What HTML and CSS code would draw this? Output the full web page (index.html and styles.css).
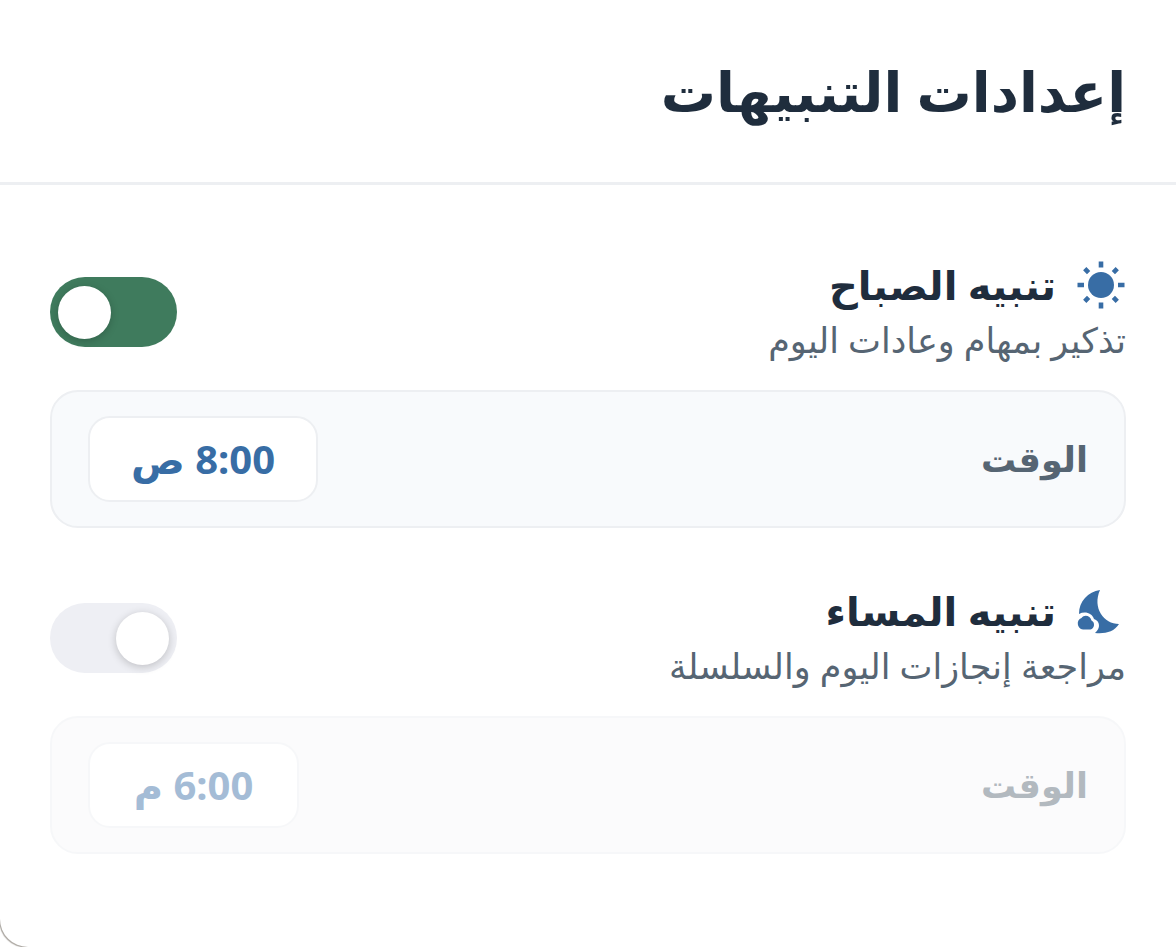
FILE: index.html
```
<!DOCTYPE html>
<html lang="ar" dir="rtl">
<head>
<meta charset="utf-8">
<meta name="viewport" content="width=device-width, initial-scale=1">
<title>إعدادات التنبيهات</title>
<link rel="stylesheet" href="styles.css">
</head>
<body>
<main class="sheet">
  <header class="sheet-header"><h1 class="title">إعدادات التنبيهات</h1></header>
  <div class="reminders">
    <section class="reminder">
      <div class="reminder-head">
        <div class="reminder-text">
          <h2 class="reminder-name">
            <svg class="icon" viewBox="0 0 50 50" aria-hidden="true"><circle cx="25" cy="25" r="13"/><path d="M22.700 1.500h4.600v6h-4.600zM22.700 42.500h4.600v6h-4.600zM1.500 22.700h6.500v4.600H1.500zM42 22.700h6.500v4.600H42z"/><path d="M22.700 2h4.600v5.500h-4.600zM22.700 42.500h4.600V48h-4.600zM2 22.700h5.500v4.600H2zM42.500 22.700H48v4.600h-5.500z" transform="rotate(45 25 25)"/></svg>
            <label for="morning">تنبيه الصباح</label>
          </h2>
          <p class="reminder-note">تذكير بمهام وعادات اليوم</p>
        </div>
        <input class="switch" type="checkbox" role="switch" id="morning" checked>
      </div>
      <div class="time-row">
        <span class="time-label" id="morning-time">الوقت</span>
        <button class="time-button" type="button" aria-describedby="morning-time">8:00 ص</button>
      </div>
    </section>
    <section class="reminder">
      <div class="reminder-head">
        <div class="reminder-text">
          <h2 class="reminder-name">
            <svg class="icon" viewBox="0 0 50 50" aria-hidden="true"><path d="M24 4C12 6 3 15 3 28c6-3 13-1 15 5 6 2 7 9 1 14 10 1 19-1 24-9C28 38 16 22 24 4z"/><path d="M7 43.500a6 6 0 0 1-1.500-11.500c3-4 9-2 10 2.500 4 2 3 8-1 9z"/></svg>
            <label for="evening">تنبيه المساء</label>
          </h2>
          <p class="reminder-note">مراجعة إنجازات اليوم والسلسلة</p>
        </div>
        <input class="switch" type="checkbox" role="switch" id="evening">
      </div>
      <div class="time-row time-row-off">
        <span class="time-label" id="evening-time">الوقت</span>
        <button class="time-button" type="button" aria-describedby="evening-time" disabled>6:00 م</button>
      </div>
    </section>
  </div>
</main>
</body>
</html>
```
FILE: styles.css
```
* { box-sizing: border-box; }
body { margin: 0; background: #fff; color: #1f2d3d; font-family: "Noto Sans", "DejaVu Sans", sans-serif; }
h1, h2, p { margin: 0; }
.sheet { min-height: 100vh; background: #fff; border-bottom-left-radius: 28px; box-shadow: -1px 1px 1px #aaa6a0; overflow: hidden; }
.sheet-header { padding: 52px 50px; border-bottom: 3px solid #edeff2; }
.title { font-size: 55px; line-height: 78px; font-weight: 700; }
.reminders { display: flex; flex-direction: column; gap: 55px; padding: 72px 50px 92px; }
.reminder { display: flex; flex-direction: column; gap: 23px; }
.reminder-head { display: flex; align-items: center; justify-content: space-between; }
.reminder-name { display: flex; align-items: center; gap: 20px; font-size: 40px; line-height: 56px; font-weight: 700; }
.icon { width: 50px; height: 50px; fill: #386da5; }
.reminder-note { font-size: 35px; line-height: 54px; color: #566573; }
.switch { appearance: none; margin: 0; width: 127px; height: 70px; border-radius: 35px; background: #eeeff4; display: flex; align-items: center; padding: 0 8px; }
.switch::before { content: ""; width: 53px; height: 53px; border-radius: 50%; background: #fff; box-shadow: 0 2px 8px #0003; }
.switch:checked { background: #3f7b5d; justify-content: flex-end; }
.time-row { display: flex; align-items: center; justify-content: space-between; padding: 24px 36px; border: 2px solid #edeff2; border-radius: 28px; background: #f8fafc; }
.time-row-off { opacity: .45; background: #f8f8f9; }
.time-label { font-size: 35px; line-height: 52px; font-weight: 700; color: #566573; }
.time-button { min-width: 211px; padding: 14px 41px; border: 2px solid #edeff2; border-radius: 22px; background: #fff; color: #386da5; font: 700 40px/54px "Noto Sans", "DejaVu Sans", sans-serif; }
```
